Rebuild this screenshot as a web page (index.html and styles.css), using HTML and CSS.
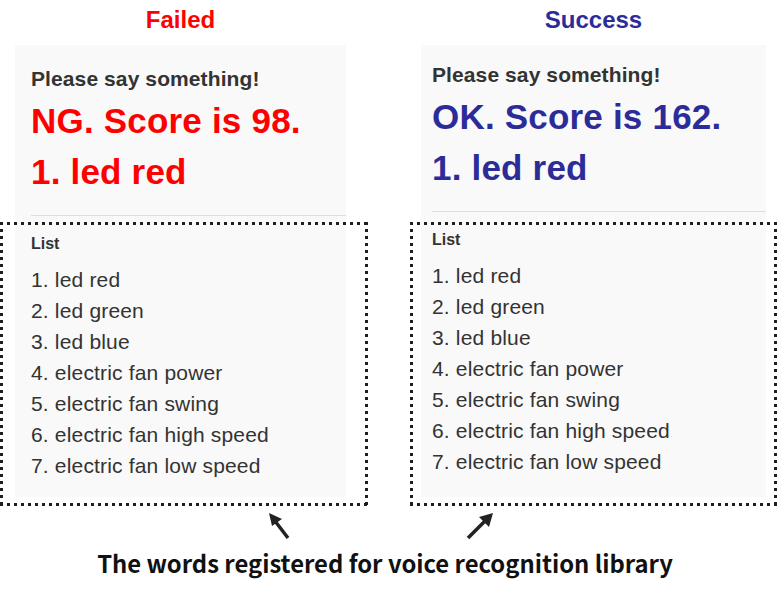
FILE: index.html
```html
<!DOCTYPE html>
<html lang="en">
<head>
<meta charset="utf-8">
<title>Voice recognition results</title>
<link rel="stylesheet" href="styles.css">
</head>
<body>
<main class="page">
  <div class="columns">
    <section class="column column--failed">
      <h2 class="column-title">Failed</h2>
      <div class="panel panel--failed">
        <div class="result">
          <p class="prompt">Please say something!</p>
          <p class="score">NG. Score is 98.</p>
          <p class="score">1. led red</p>
        </div>
        <div class="words">
          <span class="frame frame--failed"></span>
          <p class="words-title">List</p>
          <ol class="words-list">
            <li>1. led red</li>
            <li>2. led green</li>
            <li>3. led blue</li>
            <li>4. electric fan power</li>
            <li>5. electric fan swing</li>
            <li>6. electric fan high speed</li>
            <li>7. electric fan low speed</li>
          </ol>
        </div>
      </div>
    </section>
    <section class="column column--success">
      <h2 class="column-title">Success</h2>
      <div class="panel panel--success">
        <div class="result">
          <p class="prompt">Please say something!</p>
          <p class="score">OK. Score is 162.</p>
          <p class="score">1. led red</p>
        </div>
        <div class="words">
          <span class="frame frame--success"></span>
          <p class="words-title">List</p>
          <ol class="words-list">
            <li>1. led red</li>
            <li>2. led green</li>
            <li>3. led blue</li>
            <li>4. electric fan power</li>
            <li>5. electric fan swing</li>
            <li>6. electric fan high speed</li>
            <li>7. electric fan low speed</li>
          </ol>
        </div>
      </div>
    </section>
  </div>
  <div class="note">
    <svg class="arrows" width="778" height="44" viewBox="0 497 778 44" aria-hidden="true">
      <line x1="288" y1="538" x2="275" y2="521" stroke="#222" stroke-width="3.5"/>
      <polygon points="269,513 282,519 272,526" fill="#222"/>
      <line x1="468" y1="538" x2="486" y2="520" stroke="#222" stroke-width="3.5"/>
      <polygon points="493,513 489,527 479,517" fill="#222"/>
    </svg>
    <p class="caption">The words registered for voice recognition library</p>
  </div>
</main>
</body>
</html>
```

FILE: styles.css
```css
html, body {
  margin: 0;
  padding: 0;
  background: #ffffff;
}

.page {
  width: 778px;
  height: 596px;
  overflow: hidden;
  font-family: "Liberation Sans", Arial, sans-serif;
  color: #333333;
}

.columns {
  display: flex;
  gap: 75px;
  padding-left: 15px;
}

.column--failed { width: 331px; }
.column--success { width: 345px; }

.column-title {
  margin: 0 0 5px;
  font-size: 24px;
  line-height: 40px;
  font-weight: bold;
  text-align: center;
}

.column--failed .column-title { color: #ff0000; }
.column--success .column-title { color: #2c2c99; }

.panel {
  background: #f9f9f9;
}

.panel--failed { padding: 20px 0 16px 16px; }
.panel--success { padding: 16px 0 20px 11px; }

.result {
  padding-bottom: 18px;
  border-bottom: 1px solid #dddddd;
}

.prompt {
  margin: 0 0 2px;
  font-size: 21px;
  line-height: 28px;
  font-weight: bold;
  letter-spacing: 0.1px;
  color: #333333;
}

.score {
  margin: 0;
  font-size: 35px;
  line-height: 51px;
  font-weight: bold;
  letter-spacing: 0.2px;
}

.panel--failed .score { color: #ff0000; }
.panel--success .score { color: #2c2c99; }

.words {
  position: relative;
  padding-top: 18px;
}

.words-title {
  margin: 0 0 10px;
  font-size: 16px;
  line-height: 20px;
  font-weight: bold;
}

.words-list {
  list-style: none;
  margin: 0;
  padding: 0;
  font-size: 21px;
  line-height: 31px;
  letter-spacing: 0.17px;
}

.frame {
  position: absolute;
  height: 284px;
  background:
    repeating-linear-gradient(to right, #1e1e1e 0 3px, transparent 3px 7px) left top / 100% 3px no-repeat,
    repeating-linear-gradient(to right, #1e1e1e 0 3px, transparent 3px 7px) left bottom / 100% 3px no-repeat,
    repeating-linear-gradient(to bottom, #1e1e1e 0 3px, transparent 3px 7px) left top / 3px 100% no-repeat,
    repeating-linear-gradient(to bottom, #1e1e1e 0 3px, transparent 3px 7px) right top / 3px 100% no-repeat;
  pointer-events: none;
}

.frame--failed {
  top: 6px;
  left: -31px;
  width: 368px;
}

.frame--success {
  top: 10px;
  left: -22px;
  width: 367px;
}

.note {
  display: flex;
  flex-direction: column;
  align-items: center;
}

.arrows {
  display: block;
}

.caption {
  margin: 7px 8px 0 0;
  font-family: "Noto Sans CJK JP", "Noto Sans", sans-serif;
  font-size: 23.8px;
  line-height: 30px;
  font-weight: bold;
  color: #111111;
}
```
